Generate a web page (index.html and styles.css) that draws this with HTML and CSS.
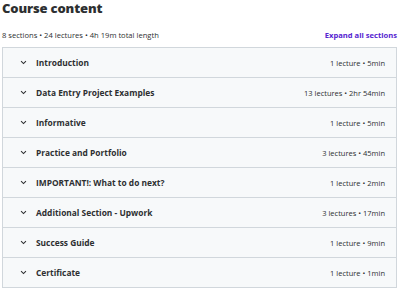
FILE: index.html
```html
<!DOCTYPE html>
<html>
<head>
<meta charset="utf-8">
<link rel="stylesheet" href="styles.css">
</head>
<body>
<div class="page">
  <h2 class="title">Course content</h2>
  <div class="summary">
    <span class="stats">8 sections • 24 lectures • 4h 19m total length</span>
    <span class="expand">Expand all sections</span>
  </div>
  <div class="sections">
    <div class="row"><svg class="chev" viewBox="0 0 10 6"><path d="M1.5 1.2 5 4.6 8.5 1.2" /></svg><span class="name">Introduction</span><span class="meta">1 lecture • 5min</span></div>
    <div class="row"><svg class="chev" viewBox="0 0 10 6"><path d="M1.5 1.2 5 4.6 8.5 1.2" /></svg><span class="name">Data Entry Project Examples</span><span class="meta">13 lectures • 2hr 54min</span></div>
    <div class="row"><svg class="chev" viewBox="0 0 10 6"><path d="M1.5 1.2 5 4.6 8.5 1.2" /></svg><span class="name">Informative</span><span class="meta">1 lecture • 5min</span></div>
    <div class="row"><svg class="chev" viewBox="0 0 10 6"><path d="M1.5 1.2 5 4.6 8.5 1.2" /></svg><span class="name">Practice and Portfolio</span><span class="meta">3 lectures • 45min</span></div>
    <div class="row"><svg class="chev" viewBox="0 0 10 6"><path d="M1.5 1.2 5 4.6 8.5 1.2" /></svg><span class="name">IMPORTANT!: What to do next?</span><span class="meta">1 lecture • 2min</span></div>
    <div class="row"><svg class="chev" viewBox="0 0 10 6"><path d="M1.5 1.2 5 4.6 8.5 1.2" /></svg><span class="name">Additional Section - Upwork</span><span class="meta">3 lectures • 17min</span></div>
    <div class="row"><svg class="chev" viewBox="0 0 10 6"><path d="M1.5 1.2 5 4.6 8.5 1.2" /></svg><span class="name">Success Guide</span><span class="meta">1 lecture • 9min</span></div>
    <div class="row"><svg class="chev" viewBox="0 0 10 6"><path d="M1.5 1.2 5 4.6 8.5 1.2" /></svg><span class="name">Certificate</span><span class="meta">1 lecture • 1min</span></div>
  </div>
</div>
</body>
</html>
```
FILE: styles.css
```css
html, body {
  margin: 0;
  padding: 0;
  background: #ffffff;
}
.page {
  padding: 0 3px 0 2px;
  font-family: "Open Sans", "Liberation Sans", sans-serif;
  color: #2d2f31;
}
.title {
  margin: 0;
  font-size: 13px;
  line-height: 17px;
  font-weight: 800;
  letter-spacing: -0.15px;
  color: #2d2f31;
}
.summary {
  display: flex;
  justify-content: space-between;
  align-items: center;
  margin-top: 12px;
  height: 12px;
  font-size: 7.6px;
  margin-bottom: 6px;
}
.stats {
  color: #2d2f31;
}
.expand {
  color: #5624d0;
  font-weight: 700;
}
.sections {
  border: 1px solid #d1d7dc;
  border-bottom: none;
}
.row {
  display: flex;
  align-items: center;
  height: 29px;
  background: #f7f9fa;
  border-bottom: 1px solid #d1d7dc;
  padding: 0 11px 0 17px;
}
.chev {
  width: 7px;
  height: 5px;
  fill: none;
  stroke: #2d2f31;
  stroke-width: 1.5;
  margin-right: 9px;
}
.name {
  flex: 1;
  font-size: 8.4px;
  font-weight: 700;
  color: #2d2f31;
}
.meta {
  font-size: 7.5px;
  color: #2d2f31;
}
```
